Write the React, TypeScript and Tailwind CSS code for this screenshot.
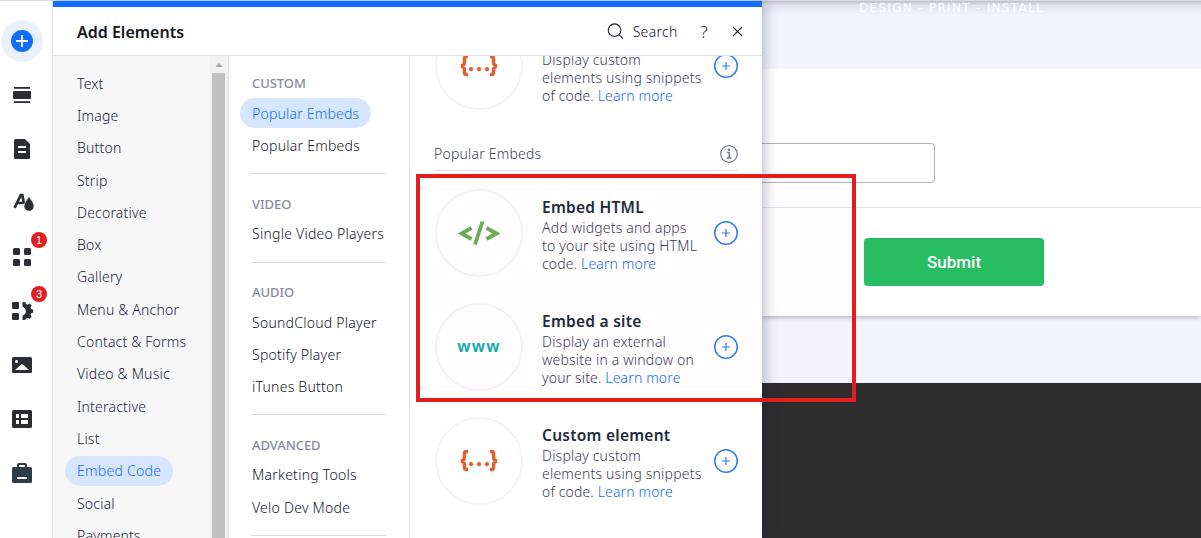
import type { ReactNode } from 'react';

const categories = [
  'Text', 'Image', 'Button', 'Strip', 'Decorative', 'Box', 'Gallery', 'Menu & Anchor',
  'Contact & Forms', 'Video & Music', 'Interactive', 'List', 'Embed Code', 'Social', 'Payments',
];

const sections = [
  { title: 'CUSTOM', items: ['Popular Embeds', 'Popular Embeds'], active: 0 },
  { title: 'VIDEO', items: ['Single Video Players'], active: -1 },
  { title: 'AUDIO', items: ['SoundCloud Player', 'Spotify Player', 'iTunes Button'], active: -1 },
  { title: 'ADVANCED', items: ['Marketing Tools', 'Velo Dev Mode'], active: -1 },
];

function RailSlot({ children, badge }: { children: ReactNode; badge?: string }) {
  return (
    <div className="relative flex h-[54px] w-11 shrink-0 items-center justify-center">
      {children}
      {badge && (
        <span className="absolute top-[2px] left-[31px] flex size-4 items-center justify-center rounded-full bg-[#e01f22] font-['Liberation_Sans'] text-[11px] leading-none font-normal tracking-normal text-white">
          {badge}
        </span>
      )}
    </div>
  );
}

function Rail() {
  return (
    <nav className="relative z-20 flex w-[53px] shrink-0 flex-col border-r border-[#dfe3eb] bg-white text-[#2b2d33]">
      <div className="flex h-[67px] w-11 shrink-0 items-start justify-center pt-[19px]">
        <div className="flex size-[42px] items-center justify-center rounded-full bg-[#eaf1fd]">
          <svg width="22" height="22" viewBox="0 0 22 22">
            <circle cx="11" cy="11" r="11" fill="#116dff" />
            <path d="M11 5v12M5 11h12" stroke="#fff" strokeWidth="1.8" />
          </svg>
        </div>
      </div>
      <RailSlot>
        <svg width="18" height="16" viewBox="0 0 18 16" fill="currentColor">
          <rect x="1" y="0" width="16" height="1.8" />
          <rect x="0" y="4" width="18" height="8" rx="1" />
          <rect x="1" y="14.2" width="16" height="1.8" />
        </svg>
      </RailSlot>
      <RailSlot>
        <svg width="16" height="20" viewBox="0 0 16 20">
          <path d="M1.5 0H11l5 5v13.5a1.5 1.5 0 0 1-1.5 1.5h-13A1.5 1.5 0 0 1 0 18.5v-17A1.5 1.5 0 0 1 1.500 0z" fill="currentColor" />
          <path d="M4 8h8M4 13h8" stroke="#fff" strokeWidth="2" />
        </svg>
      </RailSlot>
      <RailSlot>
        <svg width="22" height="20" viewBox="0 0 22 20" className="ml-[3px]">
          <path d="M1.600 14.800 7.800 2h1.500l1.700 8.800M4.200 10h5.600" fill="none" stroke="currentColor" strokeWidth="2.700" />
          <path d="M16 3.500c2 3.300 5 6.200 5 9.700a5 5 0 0 1-10 0c0-3.500 3-6.400 5-9.700z" fill="currentColor" stroke="#fff" strokeWidth=".6" />
        </svg>
      </RailSlot>
      <RailSlot badge="1">
        <svg width="18" height="18" viewBox="0 0 18 18" fill="currentColor">
          <rect width="7" height="7" rx="1.500" />
          <rect x="11" width="7" height="7" rx="1.500" />
          <rect y="11" width="7" height="7" rx="1.500" />
          <rect x="11" y="11" width="7" height="7" rx="1.500" />
        </svg>
      </RailSlot>
      <RailSlot badge="3">
        <svg width="22" height="18" viewBox="0 0 22 18" fill="currentColor" className="ml-[1px]">
          <rect width="7" height="7" rx="1.300" />
          <rect y="11" width="7" height="7" rx="1.300" />
          <path d="M10.500 0h2.700l.7 2.100 1.700.7L17.600 1.500 19.600 3.500 18.600 5.500l.6 1.500 2 .7v2.800l-2 .7-.6 1.500 1 2-2 2-2-1-1.700.7-.7 2h-2.700v-4.700a4.700 4.700 0 0 0 0-9z" />
        </svg>
      </RailSlot>
      <RailSlot>
        <svg width="20" height="16" viewBox="0 0 20 16">
          <rect width="20" height="16" rx="1.500" fill="currentColor" />
          <circle cx="4.500" cy="4.500" r="1.500" fill="#fff" />
          <path d="M3 13l4.500-4 2.500-2 2.500 2L17 13z" fill="#fff" />
        </svg>
      </RailSlot>
      <RailSlot>
        <svg width="20" height="18" viewBox="0 0 20 18">
          <rect width="20" height="18" rx="1.500" fill="currentColor" />
          <path d="M4 4h3v4H4zM9 4h7v4H9zM4 10h3v4H4zM9 10h7v4H9z" fill="#fff" />
        </svg>
      </RailSlot>
      <RailSlot>
        <svg width="20" height="20" viewBox="0 0 20 20" className="text-[#2b3b47]">
          <path d="M6 5V1.800Q6 1 6.800 1h6.400q.8 0 .8.800V5" fill="none" stroke="currentColor" strokeWidth="2" />
          <rect y="4" width="20" height="16" rx="1.500" fill="currentColor" />
          <path d="M5 15h10" stroke="#fff" strokeWidth="2" />
        </svg>
      </RailSlot>
    </nav>
  );
}

function CategoryList() {
  return (
    <div className="flex w-[176px] shrink-0 overflow-hidden border-r border-[#dfe3eb] bg-[#f7f7f7]">
      <ul className="flex-1 pt-[11px]">
        {categories.map((c) => (
          <li key={c} className="flex h-[32.3px] items-center pl-3">
            <span
              className={
                c === 'Embed Code'
                  ? 'flex h-[30px] items-center rounded-full bg-[#d6e6fe] px-3 pt-px tracking-[0.28px] text-[#116dff]'
                  : 'px-3 pt-px text-[#20243c]'
              }
            >
              {c}
            </span>
          </li>
        ))}
      </ul>
      <div className="flex w-[18px] flex-col items-center bg-[#f1f1f1]">
        <svg width="18" height="17" viewBox="0 0 18 17">
          <path d="M5.500 11 9 7l3.500 4z" fill="#a3a3a3" />
        </svg>
        <div className="mr-px w-[13px] flex-1 bg-[#c1c1c1]" />
      </div>
    </div>
  );
}

function SectionList() {
  return (
    <div className="w-[181px] shrink-0 overflow-hidden border-r border-[#dfe3eb] bg-white pt-[13px]">
      {sections.map((s) => (
        <section key={s.title} className="px-[11px]">
          <h3 className="flex h-7 items-center pt-px pl-3 text-[13px] tracking-[-0.05px] font-medium text-[#868aa5]">{s.title}</h3>
          {s.items.map((item, i) => (
            <div key={i} className="flex h-[32.3px] items-center whitespace-nowrap">
              <span
                className={
                  i === s.active
                    ? 'flex h-[30px] items-center rounded-full bg-[#d6e6fe] px-3 pt-px text-[#116dff]'
                    : 'px-3 pt-px tracking-[0.25px] text-[#12162d]'
                }
              >
                {item}
              </span>
            </div>
          ))}
          <div className="mt-[11.7px] mb-[15.3px] ml-[11px] h-px w-[135px] bg-[#d9dce2]" />
        </section>
      ))}
    </div>
  );
}

function CodeIcon() {
  return (
    <svg width="42" height="26" viewBox="0 0 42 26" fill="none" stroke="#6aad57" strokeWidth="3.800">
      <path d="M13.500 8 3.500 13.500l10 5.500M28.500 8l10 5.500-10 5.500M24.500 1.500l-7.500 23" />
    </svg>
  );
}

function BracesIcon() {
  return (
    <svg width="40" height="24" viewBox="0 0 40 24" fill="none" stroke="#e2602f" strokeWidth="3.400">
      <path d="M9 2.500H7.700Q5.400 2.500 5.400 5v3.500Q5.400 11.500 2 12 5.400 12.500 5.400 15.500V18Q5.400 20.500 7.700 20.500H9M31 2.500h1.300q2.300 0 2.300 2.500v3.500q0 3 3.400 3.500-3.400.5-3.400 3.500V18q0 2.500-2.300 2.500H31" />
      <g fill="#e2602f" stroke="none">
        <circle cx="12" cy="15.200" r="2.100" />
        <circle cx="20" cy="15.200" r="2.100" />
        <circle cx="28" cy="15.200" r="2.100" />
      </g>
    </svg>
  );
}

function ElementRow({ icon, title, lines, last }: { icon: ReactNode; title?: string; lines: string[]; last: string }) {
  return (
    <div className="flex h-[88px] shrink-0 items-center">
      <div className="ml-px flex size-[88px] shrink-0 items-center justify-center rounded-full border-2 border-[#f4f4f7]">{icon}</div>
      <div className="ml-[19px] w-[172px] pt-[2px] whitespace-nowrap text-[14px] leading-[18px] text-[#3c4056]">
        <h4 className="mb-px h-[22px] text-[15.5px] leading-[22px] font-semibold tracking-[0.25px] text-[#1d2c3b]">{title}</h4>
        {lines.map((l) => (
          <p key={l}>{l}</p>
        ))}
        <p className="tracking-[0.15px]">
          {last} <a className="text-[#116dff]">Learn more</a>
        </p>
      </div>
      <svg width="24" height="24" viewBox="0 0 24 24" fill="none" stroke="#2f7ded" className="shrink-0">
        <circle cx="12" cy="12" r="11.250" strokeWidth="1.500" />
        <path d="M12 8v8M8 12h8" strokeWidth="1.200" />
      </svg>
    </div>
  );
}

function CustomElementRow({ title }: { title?: string }) {
  return <ElementRow icon={<BracesIcon />} title={title} lines={['Display custom', 'elements using snippets']} last="of code." />;
}

function ElementsColumn() {
  return (
    <div className="flex flex-1 flex-col overflow-hidden bg-white pl-6">
      <div className="mt-[-34.5px] flex h-[88px] shrink-0">
        <CustomElementRow />
      </div>
      <div className="mt-[28px] mb-[18.5px] flex h-[33px] w-[304px] shrink-0 items-center justify-between border-b border-[#dcdfe5] text-[#3c4056]">
        <span className="pt-px">Popular Embeds</span>
        <svg width="18" height="18" viewBox="0 0 18 18" fill="none" stroke="#777b93" strokeWidth="1.200">
          <circle cx="9" cy="9" r="8.300" />
          <path d="M7 7.500h2.200v5.300M6.800 13h4.700" strokeWidth="1.500" />
          <circle cx="9" cy="4.800" r=".7" fill="#777b93" />
        </svg>
      </div>
      <div className="flex flex-col gap-[26px]">
        <ElementRow icon={<CodeIcon />} title="Embed HTML" lines={['Add widgets and apps', 'to your site using HTML']} last="code." />
        <ElementRow
          icon={<span className="font-['Open_Sans'] text-[15.5px] font-bold tracking-[1.2px] text-[#20aeac]">www</span>}
          title="Embed a site"
          lines={['Display an external', 'website in a window on']}
          last="your site."
        />
        <CustomElementRow title="Custom element" />
      </div>
    </div>
  );
}

function AddPanel() {
  return (
    <div className="z-10 flex w-[709px] shrink-0 flex-col bg-white shadow-[3px_0_12px_rgba(30,35,70,0.28)]">
      <div className="h-[6px] shrink-0 bg-[#116dff]" />
      <header className="flex h-[49px] shrink-0 items-center border-b border-[#dfe3eb] pl-6 pr-[19px]">
        <h2 className="pt-px text-[16px] font-semibold tracking-normal text-[#131720]">Add Elements</h2>
        <div className="ml-auto flex items-center text-[#12162d]">
          <svg width="17" height="17" viewBox="0 0 17 17" fill="none" stroke="#1f2230" strokeWidth="1.100">
            <circle cx="7.500" cy="7.200" r="6.300" />
            <path d="m12 11.700 4 4" />
          </svg>
          <span className="ml-[9px] pt-px tracking-[0.3px]">Search</span>
          <span className="ml-[23px] text-[17px]">?</span>
          <svg width="11" height="11" viewBox="0 0 11 11" stroke="#1f2230" strokeWidth="1.100" className="ml-[24px]">
            <path d="m1 1 9 9M10 1l-9 9" />
          </svg>
        </div>
      </header>
      <div className="flex min-h-0 flex-1">
        <CategoryList />
        <SectionList />
        <ElementsColumn />
      </div>
    </div>
  );
}

function SiteCanvas() {
  return (
    <main className="flex min-w-0 flex-1 flex-col bg-[#f3f3fd]">
      <div className="h-[68px] shrink-0 overflow-hidden bg-[#f3f3fd] bg-[linear-gradient(to_bottom,rgba(90,95,110,0.35),rgba(90,95,110,0.12)_4px,transparent_14px)] pl-[97px]">
        <p className="font-['DejaVu_Sans'] text-[12px] leading-[14px] font-normal tracking-[1.3px] whitespace-nowrap text-white/90">DESIGN - PRINT - INSTALL</p>
      </div>
      <div className="h-[247px] shrink-0 bg-white shadow-[0_3px_4px_-1px_rgba(60,65,110,0.3)]">
        <div className="flex h-[139px] flex-col justify-end border-b border-[#e2e4ec] pb-6">
          <div className="h-10 w-[173px] rounded-r border border-l-0 border-[#b3b3b8]" />
        </div>
        <div className="flex pt-[30px] pl-[102px]">
          <button className="h-12 w-[180px] rounded bg-[#27bd62] font-[Roboto] text-[17px] font-medium tracking-normal text-white">Submit</button>
        </div>
      </div>
      <div className="mt-[67px] flex-1 bg-[#2d2d2d]" />
    </main>
  );
}

export default function App() {
  return (
    <div className="relative h-[538px] w-[1201px] overflow-hidden bg-white font-['Noto_Sans',sans-serif] text-[14px] leading-none font-light tracking-[0.2px]">
      <div className="flex h-[538px] border-t border-[#d9dde3]">
        <Rail />
        <AddPanel />
        <SiteCanvas />
      </div>
      <div className="pointer-events-none absolute top-[174px] left-[416px] z-20 h-[228px] w-[440px] border-4 border-[#e31d1f] bg-[rgba(227,29,130,0.006)]" />
    </div>
  );
}
